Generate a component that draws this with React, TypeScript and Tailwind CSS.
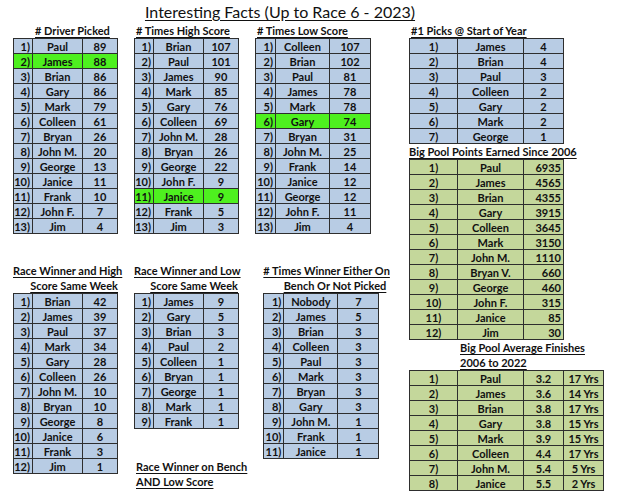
import React from "react";

type Col = { w: string; align: string };
type Row = (string | number)[];

const blue = "bg-[#b8cce4]";
const olive = "bg-[#c4d79b]";

// rank | name | value columns used by the small tables
const smallCols: Col[] = [
  { w: "w-[19px]", align: "text-right pr-[2px]" },
  { w: "w-[50px]", align: "text-center" },
  { w: "w-[35px]", align: "text-center" },
];
const wideCols: Col[] = [
  { w: "w-[20px]", align: "text-right pr-[2px]" },
  { w: "w-[54px]", align: "text-center" },
  { w: "w-[41px]", align: "text-center" },
];
const picksCols: Col[] = [
  { w: "w-[48px]", align: "text-center" },
  { w: "w-[66px]", align: "text-center" },
  { w: "w-[40px]", align: "text-center" },
];
const pointsCols: Col[] = [
  { w: "w-[48px]", align: "text-center" },
  { w: "w-[66px]", align: "text-center" },
  { w: "w-[40px]", align: "text-right pr-[2px]" },
];
const avgCols: Col[] = [
  { w: "w-[48px]", align: "text-center" },
  { w: "w-[66px]", align: "text-center" },
  { w: "w-[40px]", align: "text-center" },
  { w: "w-[40px]", align: "text-center" },
];

const rank = (list: (string | number)[][]): Row[] => list.map((r, i) => [`${i + 1})`, ...r]);

const driverPicked = rank([
  ["Paul", 89], ["James", 88], ["Brian", 86], ["Gary", 86], ["Mark", 79], ["Colleen", 61], ["Bryan", 26],
  ["John M.", 20], ["George", 13], ["Janice", 11], ["Frank", 10], ["John F.", 7], ["Jim", 4],
]);
const highScore = rank([
  ["Brian", 107], ["Paul", 101], ["James", 90], ["Mark", 85], ["Gary", 76], ["Colleen", 69], ["John M.", 28],
  ["Bryan", 26], ["George", 22], ["John F.", 9], ["Janice", 9], ["Frank", 5], ["Jim", 3],
]);
const lowScore = rank([
  ["Colleen", 107], ["Brian", 102], ["Paul", 81], ["James", 78], ["Mark", 78], ["Gary", 74], ["Bryan", 31],
  ["John M.", 25], ["Frank", 14], ["Janice", 12], ["George", 12], ["John F.", 11], ["Jim", 4],
]);
const picks = rank([["James", 4], ["Brian", 4], ["Paul", 3], ["Colleen", 2], ["Gary", 2], ["Mark", 2], ["George", 1]]);
const points = rank([
  ["Paul", 6935], ["James", 4565], ["Brian", 4355], ["Gary", 3915], ["Colleen", 3645], ["Mark", 3150],
  ["John M.", 1110], ["Bryan V.", 660], ["George", 460], ["John F.", 315], ["Janice", 85], ["Jim", 30],
]);
const averages = rank([
  ["Paul", "3.2", "17 Yrs"], ["James", "3.6", "14 Yrs"], ["Brian", "3.8", "17 Yrs"], ["Gary", "3.8", "15 Yrs"],
  ["Mark", "3.9", "15 Yrs"], ["Colleen", "4.4", "17 Yrs"], ["John M.", "5.4", "5 Yrs"], ["Janice", "5.5", "2 Yrs"],
]);
const winHigh = rank([
  ["Brian", 42], ["James", 39], ["Paul", 37], ["Mark", 34], ["Gary", 28], ["Colleen", 26],
  ["John M.", 10], ["Bryan", 10], ["George", 8], ["Janice", 6], ["Frank", 3], ["Jim", 1],
]);
const winLow = rank([
  ["James", 9], ["Gary", 5], ["Brian", 3], ["Paul", 2], ["Colleen", 1], ["Bryan", 1], ["George", 1], ["Mark", 1], ["Frank", 1],
]);
const winBench = rank([
  ["Nobody", 7], ["James", 5], ["Brian", 3], ["Colleen", 3], ["Paul", 3], ["Mark", 3], ["Bryan", 3],
  ["Gary", 3], ["John M.", 1], ["Frank", 1], ["Janice", 1],
]);

function DataTable({ rows, cols, width, bg, hi }: { rows: Row[]; cols: Col[]; width: string; bg: string; hi?: number }) {
  return (
    <table className={`border-collapse table-fixed border border-[#4d4d4d] ${width} ${bg}`}>
      <colgroup>
        {cols.map((c, i) => (
          <col key={i} className={c.w} />
        ))}
      </colgroup>
      <tbody>
        {rows.map((r, i) => (
          <tr key={i} className={i === hi ? "bg-[#4ef01f]" : ""}>
            {r.map((v, j) => (
              <td key={j} className={`h-[15px] p-0 border border-[#2e2e2e] leading-none ${cols[j].align}`}>
                {v}
              </td>
            ))}
          </tr>
        ))}
      </tbody>
    </table>
  );
}

function Head({ children, className = "" }: { children: React.ReactNode; className?: string }) {
  return <div className={`h-[15px] leading-[15px] underline underline-offset-[2px] whitespace-nowrap ${className}`}>{children}</div>;
}

export default function App() {
  return (
    <div className="w-[640px] h-[494px] bg-white text-[#111] font-bold text-[11px] overflow-hidden" style={{ fontFamily: "Lato, 'Liberation Sans', sans-serif" }}>
      {/* title */}
      <div className="w-[560px] h-[23px] pt-[3px] text-center text-[16px] font-normal leading-[18px] underline underline-offset-[2px]">
        Interesting Facts (Up to Race 6 - 2023)
      </div>

      <div className="flex">
        {/* left side: six tables */}
        <div className="w-[409px] pl-[13px]">
          <div className="flex gap-4">
            <div>
              <Head className="pl-[22px]"># Driver Picked</Head>
              <DataTable rows={driverPicked} cols={smallCols} width="w-[104px]" bg={blue} hi={1} />
            </div>
            <div>
              <Head className="pl-[2px]"># Times High Score</Head>
              <DataTable rows={highScore} cols={smallCols} width="w-[104px]" bg={blue} hi={10} />
            </div>
            <div>
              <Head className="pl-[2px]"># Times Low Score</Head>
              <DataTable rows={lowScore} cols={wideCols} width="w-[115px]" bg={blue} hi={5} />
            </div>
          </div>

          <div className="flex gap-4 mt-[29px]">
            <div>
              <div className="w-[105px] text-right">
                <Head>Race Winner and High</Head>
                <Head>Score Same Week</Head>
              </div>
              <DataTable rows={winHigh} cols={smallCols} width="w-[104px]" bg={blue} />
            </div>
            <div>
              <div className="w-[104px] text-right">
                <Head>Race Winner and Low</Head>
                <Head>Score Same Week</Head>
              </div>
              <DataTable rows={winLow} cols={smallCols} width="w-[104px]" bg={blue} />
              <div className="mt-[30px] pl-[2px]">
                <Head>Race Winner on Bench</Head>
                <Head>AND Low Score</Head>
              </div>
            </div>
            <div>
              <div className="w-[123px] text-right">
                <Head># Times Winner Either On</Head>
                <Head>Bench Or Not Picked</Head>
              </div>
              <DataTable rows={winBench} cols={wideCols} width="w-[115px]" bg={blue} />
            </div>
          </div>
        </div>

        {/* right side */}
        <div className="w-[200px]">
          <Head className="pl-[2px]">#1 Picks @ Start of Year</Head>
          <DataTable rows={picks} cols={picksCols} width="w-[154px]" bg={blue} />
          <Head className="w-[154px] text-center">Big Pool Points Earned Since 2006</Head>
          <DataTable rows={points} cols={pointsCols} width="w-[154px]" bg={olive} />
          <div className="pl-[51px]">
            <Head>Big Pool Average Finishes</Head>
            <Head>2006 to 2022</Head>
          </div>
          <DataTable rows={averages} cols={avgCols} width="w-[194px]" bg={olive} />
        </div>
      </div>
    </div>
  );
}
